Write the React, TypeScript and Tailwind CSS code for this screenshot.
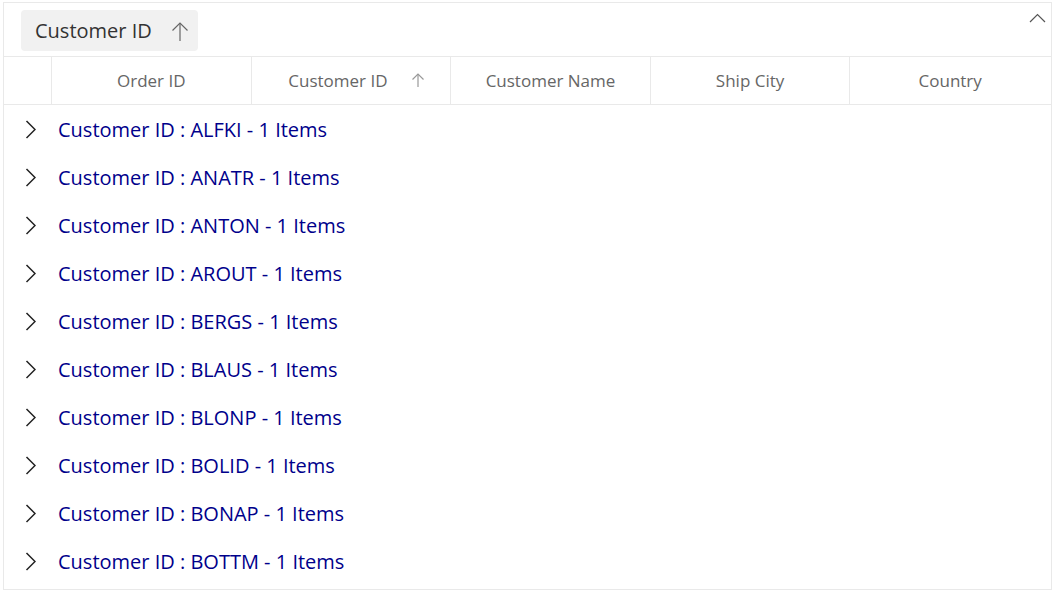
const groups = ['ALFKI', 'ANATR', 'ANTON', 'AROUT', 'BERGS', 'BLAUS', 'BLONP', 'BOLID', 'BONAP', 'BOTTM'];

const columns = ['Order ID', 'Customer ID', 'Customer Name', 'Ship City', 'Country'];

function UpArrow({ w, h, color }: { w: number; h: number; color: string }) {
  return (
    <svg width={w} height={h} viewBox={`0 0 ${w} ${h}`} fill="none" stroke={color} strokeWidth={1.2}>
      <line x1={w / 2} y1={1} x2={w / 2} y2={h} />
      <polyline points={`0.5,${w / 2 + 0.5} ${w / 2},1 ${w - 0.5},${w / 2 + 0.5}`} />
    </svg>
  );
}

function App() {
  return (
    <div className="h-[592px] w-[1055px] bg-white pl-[3px] pt-[2px] pr-[3px] pb-[2px]" style={{ fontFamily: '"Open Sans", "Noto Sans", sans-serif' }}>
      <div className="flex h-[588px] w-[1049px] flex-col overflow-hidden border border-[#e9e9e9]">
        {/* group drop area */}
        <div className="relative flex h-[54px] items-start border-b border-[#e9e9e9] pl-[17px] pt-[7px]">
          <div className="flex h-[41px] items-center rounded-[4px] bg-[#f1f1f1] pl-[14px] pr-[10px] text-[20px] text-[#333]">
            <span>Customer ID</span>
            <span className="ml-[20px] mt-[1px]">
              <UpArrow w={16} h={19} color="#666" />
            </span>
          </div>
          <svg className="absolute right-[5px] top-[10px]" width="17" height="10" viewBox="0 0 17 10" fill="none" stroke="#555" strokeWidth={1.2}>
            <polyline points="1,9 8.5,1.5 16,9" />
          </svg>
        </div>

        {/* header */}
        <div className="flex h-[48px] border-b border-[#e9e9e9] text-[17px] text-[#666]">
          <div className="w-[48px] border-r border-[#e9e9e9]" />
          {columns.map((c, i) => (
            <div
              key={c}
              className={`relative flex w-[199.6px] items-center justify-center ${i < columns.length - 1 ? 'border-r border-[#e9e9e9]' : ''} ${c === 'Customer ID' ? 'pr-[26px]' : ''}`}
            >
              <span>{c}</span>
              {c === 'Customer ID' && (
                <span className="absolute right-[26px] top-[16px]">
                  <UpArrow w={12} h={14} color="#999" />
                </span>
              )}
            </div>
          ))}
        </div>

        {/* caption rows */}
        <div className="flex flex-col">
          {groups.map((g) => (
            <div key={g} className="flex h-[48px] items-center">
              <div className="flex w-[48px] items-center pl-[21px]">
                <svg width="11" height="19" viewBox="0 0 11 19" fill="none" stroke="#222" strokeWidth={1.5}>
                  <polyline points="1.5,1 10,9.5 1.5,18" />
                </svg>
              </div>
              <span className="pl-[6px] pt-[2px] text-[20px] text-[#00008b]">
                Customer ID : {g} - 1 Items
              </span>
            </div>
          ))}
        </div>
      </div>
    </div>
  );
}

export default App;
